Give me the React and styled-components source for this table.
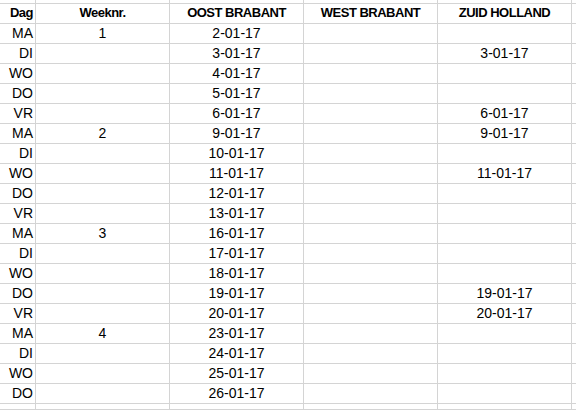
import styled, { createGlobalStyle } from "styled-components";

const GlobalStyle = createGlobalStyle`
	body {
		margin: 0;
		background: #fff;
		font-family: "Liberation Sans", Arial, sans-serif;
		color: #000;
	}
`

const Sheet = styled.div`
	display: grid;
	grid-template-columns: 36px 134px 134px 134px 134px 1fr;
	grid-template-rows: 4px repeat(20, 20px) 1fr;
	width: 576px;
	height: 410px;
	overflow: hidden;
`

const Cell = styled.div`
	box-sizing: border-box;
	display: flex;
	align-items: flex-end;
	justify-content: ${({$align}) => ($align == 'right' ? 'flex-end' : 'center')};
	padding: 0 ${({$align}) => ($align == 'right' ? '2px' : '0')} 2px 0;
	border-bottom: 1px solid #d4d4d4;
	border-right: ${({$last}) => ($last ? 'none' : '1px solid #d4d4d4')};
	font-size: ${({$bold}) => ($bold ? '13px' : '14px')};
	font-weight: ${({$bold}) => ($bold ? 700 : 400)};
	letter-spacing: ${({$bold}) => ($bold ? '-0.5px' : '0')};
	line-height: 16px;
	white-space: nowrap;
`

const header = ['Dag', 'Weeknr.', 'OOST BRABANT', 'WEST BRABANT', 'ZUID HOLLAND']

const rows = [
	['MA', '1', '2-01-17', '', ''],
	['DI', '', '3-01-17', '', '3-01-17'],
	['WO', '', '4-01-17', '', ''],
	['DO', '', '5-01-17', '', ''],
	['VR', '', '6-01-17', '', '6-01-17'],
	['MA', '2', '9-01-17', '', '9-01-17'],
	['DI', '', '10-01-17', '', ''],
	['WO', '', '11-01-17', '', '11-01-17'],
	['DO', '', '12-01-17', '', ''],
	['VR', '', '13-01-17', '', ''],
	['MA', '3', '16-01-17', '', ''],
	['DI', '', '17-01-17', '', ''],
	['WO', '', '18-01-17', '', ''],
	['DO', '', '19-01-17', '', '19-01-17'],
	['VR', '', '20-01-17', '', '20-01-17'],
	['MA', '4', '23-01-17', '', ''],
	['DI', '', '24-01-17', '', ''],
	['WO', '', '25-01-17', '', ''],
	['DO', '', '26-01-17', '', ''],
]

function Row({cells, bold}) {
	return <>
		{cells.map((c, i) => <Cell key={i} $align={i == 0 ? 'right' : 'center'} $bold={bold}>{c}</Cell>)}
		<Cell $last/>
	</>
}

export default function App() {
	const blank = ['', '', '', '', '']
	return <>
		<GlobalStyle/>
		<Sheet>
			<Row cells={blank}/>
			<Row cells={header} bold/>
			{rows.map((r, i) => <Row key={i} cells={r}/>)}
			<Row cells={blank}/>
		</Sheet>
	</>
}
